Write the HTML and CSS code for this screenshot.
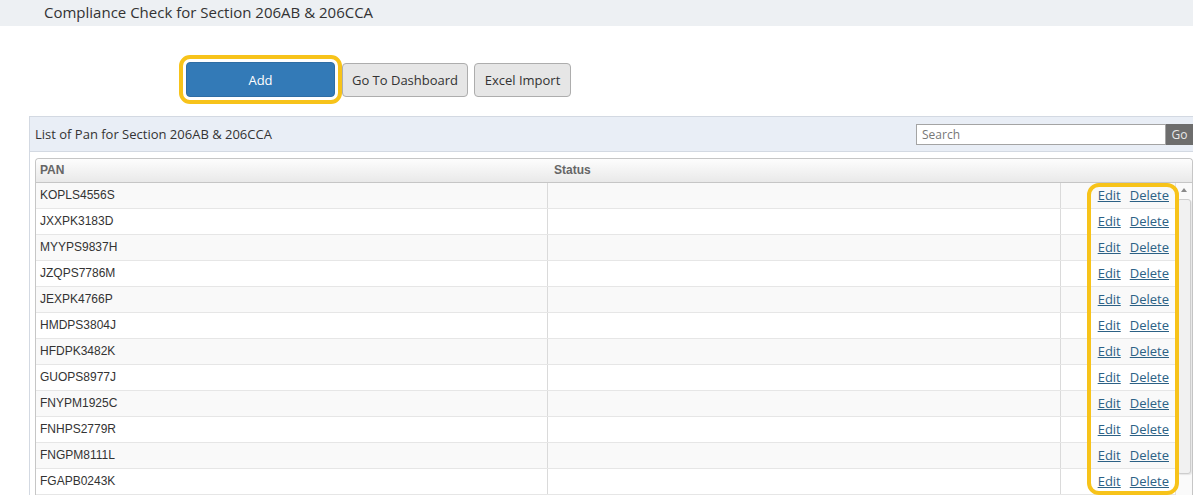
FILE: index.html
```html
<!DOCTYPE html>
<html lang="en">
<head>
  <meta charset="UTF-8">
  <title>Compliance Check for Section 206AB &amp; 206CCA</title>
  <link rel="stylesheet" href="styles.css">
</head>
<body>
  <div class="page-title">Compliance Check for Section 206AB &amp; 206CCA</div>

  <div class="toolbar">
    <span class="add-ring">
      <button type="button" class="btn btn-primary">Add</button>
    </span>
    <button type="button" class="btn btn-default btn-dashboard">Go To Dashboard</button>
    <button type="button" class="btn btn-default btn-import">Excel Import</button>
  </div>

  <div class="panel">
    <div class="panel-heading">
      <div class="panel-title">List of Pan for Section 206AB &amp; 206CCA</div>
      <div class="search-group">
        <input type="text" class="search-input" placeholder="Search">
        <button type="button" class="search-go">Go</button>
      </div>
    </div>

    <div class="panel-body">
      <div class="grid">
        <div class="grid-header">
          <div class="th th-pan">PAN</div>
          <div class="th th-status">Status</div>
          <div class="th"></div>
        </div>

        <div class="grid-body">
          <div class="rows">
            <div class="row"><div class="td">KOPLS4556S</div><div class="td"></div><div class="td td-actions"><a href="#">Edit</a><a href="#">Delete</a></div></div>
            <div class="row"><div class="td">JXXPK3183D</div><div class="td"></div><div class="td td-actions"><a href="#">Edit</a><a href="#">Delete</a></div></div>
            <div class="row"><div class="td">MYYPS9837H</div><div class="td"></div><div class="td td-actions"><a href="#">Edit</a><a href="#">Delete</a></div></div>
            <div class="row"><div class="td">JZQPS7786M</div><div class="td"></div><div class="td td-actions"><a href="#">Edit</a><a href="#">Delete</a></div></div>
            <div class="row"><div class="td">JEXPK4766P</div><div class="td"></div><div class="td td-actions"><a href="#">Edit</a><a href="#">Delete</a></div></div>
            <div class="row"><div class="td">HMDPS3804J</div><div class="td"></div><div class="td td-actions"><a href="#">Edit</a><a href="#">Delete</a></div></div>
            <div class="row"><div class="td">HFDPK3482K</div><div class="td"></div><div class="td td-actions"><a href="#">Edit</a><a href="#">Delete</a></div></div>
            <div class="row"><div class="td">GUOPS8977J</div><div class="td"></div><div class="td td-actions"><a href="#">Edit</a><a href="#">Delete</a></div></div>
            <div class="row"><div class="td">FNYPM1925C</div><div class="td"></div><div class="td td-actions"><a href="#">Edit</a><a href="#">Delete</a></div></div>
            <div class="row"><div class="td">FNHPS2779R</div><div class="td"></div><div class="td td-actions"><a href="#">Edit</a><a href="#">Delete</a></div></div>
            <div class="row"><div class="td">FNGPM8111L</div><div class="td"></div><div class="td td-actions"><a href="#">Edit</a><a href="#">Delete</a></div></div>
            <div class="row"><div class="td">FGAPB0243K</div><div class="td"></div><div class="td td-actions"><a href="#">Edit</a><a href="#">Delete</a></div></div>
          </div>

          <div class="scrollbar">
            <div class="scroll-up"></div>
            <div class="scroll-thumb"></div>
          </div>

          <div class="actions-ring"></div>
        </div>
      </div>
    </div>
  </div>
</body>
</html>
```

FILE: styles.css
```css
* {
  box-sizing: border-box;
}

body {
  margin: 0;
  width: 1193px;
  height: 495px;
  overflow: hidden;
  background: #fff;
  color: #333;
  font-family: "Open Sans", "Noto Sans", sans-serif;
}

.page-title {
  height: 26px;
  padding-left: 44px;
  background: #edf0f3;
  font-size: 15px;
  line-height: 24px;
  color: #333;
}

/* кнопки */
.toolbar {
  display: flex;
  align-items: center;
  margin-top: 29px;
  padding-left: 179px;
}

.add-ring {
  display: inline-flex;
  padding: 3px;
  border: 4px solid #f7c31a;
  border-radius: 11px;
}

.btn {
  height: 35px;
  font-family: inherit;
  font-size: 13px;
  border-radius: 4px;
  cursor: pointer;
  padding: 0;
}

.btn-primary {
  width: 149px;
  background: #337ab7;
  border: 1px solid #2e6da4;
  color: #fff;
}

.btn-default {
  height: 34px;
  background: #e6e6e6;
  border: 1px solid #adadad;
  color: #333;
}

.btn-dashboard {
  width: 126px;
}

.btn-import {
  width: 97px;
  margin-left: 6px;
}

/* панель */
.panel {
  margin: 12px -8px 0 29px;
  border: 1px solid #d3d9e2;
}

.panel-heading {
  display: flex;
  align-items: center;
  justify-content: space-between;
  height: 35px;
  padding: 0 7px 0 5px;
  background: #e9eef6;
  border-bottom: 1px solid #d3d9e2;
}

.panel-title {
  font-size: 13px;
}

.search-group {
  display: flex;
  height: 21px;
}

.search-input {
  width: 250px;
  height: 21px;
  border: 1px solid #a4a4a4;
  padding: 0 5px;
  font-family: inherit;
  font-size: 12px;
  color: #333;
}

.search-input::placeholder {
  color: #777;
}

.search-go {
  width: 27px;
  height: 21px;
  border: none;
  background: #6d6d6d;
  color: #e8e8e8;
  font-family: inherit;
  font-size: 12px;
  padding: 0;
}

.panel-body {
  padding: 6px 0 0 5px;
}

/* таблица */
.grid {
  width: 1158px;
  border: 1px solid #c6c6c6;
  border-bottom: none;
  border-radius: 4px 4px 0 0;
  font-family: "Liberation Sans", Arial, sans-serif;
  font-size: 12px;
}

.grid-header {
  display: grid;
  grid-template-columns: 513px 1fr 130px;
  height: 24px;
  background: linear-gradient(#fdfdfd, #e9e9e9);
  border-bottom: 1px solid #c6c6c6;
  border-radius: 4px 4px 0 0;
}

.th {
  font-weight: bold;
  color: #666;
  line-height: 22px;
  padding-left: 4px;
}

.th-status {
  padding-left: 5px;
}

.grid-body {
  position: relative;
  display: flex;
}

.rows {
  width: 1139px;
}

.row {
  display: grid;
  grid-template-columns: 512px 513px 1fr;
  height: 26px;
  border-bottom: 1px solid #e6e6e6;
}

.row:nth-child(odd) {
  background: #f9f9f9;
}

.td {
  padding-left: 4px;
  line-height: 24px;
  border-right: 1px solid #dadada;
  white-space: nowrap;
}

.td-actions {
  display: flex;
  justify-content: flex-end;
  gap: 9px;
  padding-right: 6px;
  border-right: none;
  font-family: "Open Sans", sans-serif;
  font-size: 13px;
}

.td-actions a {
  color: #2c6185;
  text-decoration: underline;
}

.scrollbar {
  width: 17px;
  border-left: 1px solid #e2e2e2;
  background: #fafafa;
  padding: 1px 1px 0;
}

.scroll-up {
  height: 13px;
  position: relative;
}

.scroll-up::after {
  content: "";
  position: absolute;
  left: 4px;
  top: 4px;
  border-left: 3.5px solid transparent;
  border-right: 3.5px solid transparent;
  border-bottom: 4px solid #8a8a8a;
}

.scroll-thumb {
  height: 275px;
  margin-top: 2px;
  background: #f1f1f1;
  border: 1px solid #cdcdcd;
  border-radius: 3px;
  box-shadow: 1px 1px 1px rgba(0, 0, 0, 0.08);
}

/* жёлтая рамка поверх колонки действий */
.actions-ring {
  position: absolute;
  left: 1051px;
  top: 0;
  width: 92px;
  height: 312px;
  border: 4px solid #f7c31a;
  border-radius: 12px;
  pointer-events: none;
}
```
